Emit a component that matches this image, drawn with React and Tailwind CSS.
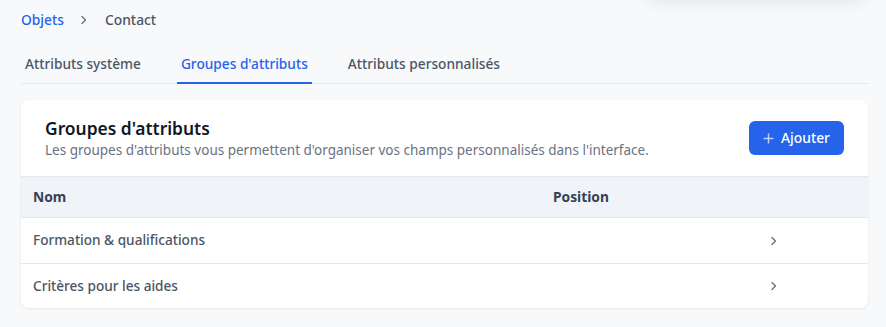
import React from "react";

function Chevron({ className = "" }) {
  return (
    <svg width="8" height="12" viewBox="0 0 8 12" className={className} fill="none">
      <path d="M2 2.5 L5.5 6 L2 9.5" stroke="currentColor" strokeWidth="1.4" strokeLinecap="round" strokeLinejoin="round" />
    </svg>
  );
}

export default function App() {
  const rows = ["Formation & qualifications", "Critères pour les aides"];
  return (
    <div className="relative min-h-[327px] bg-[#f8f9fb] pl-[21px] pr-[18px] pt-[10px] overflow-hidden font-['Noto_Sans',sans-serif]">
      <div className="absolute top-[-60px] left-[645px] w-[222px] h-[56px] rounded-lg bg-white shadow-[0_4px_18px_rgba(0,0,0,0.10)]" />
      <div className="flex items-center h-5 text-[13.8px]">
        <span className="text-[#2563eb] font-medium">Objets</span>
        <Chevron className="ml-[16px] mr-[17px] text-gray-500" />
        <span className="text-gray-600 font-medium">Contact</span>
      </div>
      <nav className="mt-[24px] flex gap-8 border-b border-gray-200">
        <div className="px-1 pb-[8px] text-[13.7px] leading-5 font-medium text-gray-600 -mb-px border-b-2 border-transparent">Attributs système</div>
        <div className="px-1 pb-[8px] text-[13.7px] leading-5 font-medium text-[#2563eb] -mb-px border-b-2 border-[#2563eb]">Groupes d'attributs</div>
        <div className="px-1 pb-[8px] text-[13.7px] leading-5 font-medium text-gray-600 -mb-px border-b-2 border-transparent">Attributs personnalisés</div>
      </nav>
      <div className="mt-4 bg-white rounded-lg shadow-[0_1px_3px_rgba(0,0,0,0.08)] overflow-hidden">
        <div className="flex items-center justify-between pl-6 pr-6 pt-[16px] pb-4">
          <div>
            <div className="text-[17.4px] leading-6 font-semibold text-gray-900">Groupes d'attributs</div>
            <div className="text-[13.5px] leading-5 text-gray-500">Les groupes d'attributs vous permettent d'organiser vos champs personnalisés dans l'interface.</div>
          </div>
          <button className="flex items-center gap-[7px] h-[34px] w-[95px] justify-center rounded-md bg-[#2563eb] text-white text-[13.8px] font-medium">
            <svg width="11" height="11" viewBox="0 0 11 11" className="opacity-70">
              <path d="M5.5 0.5 V10.5 M0.5 5.5 H10.5" stroke="white" strokeWidth="1.5" />
            </svg>
            Ajouter
          </button>
        </div>
        <div className="grid grid-cols-[520px_1fr] h-[42px] items-center bg-[#f0f3f8] border-t border-gray-200 border-b border-[#cfd8e3] text-[13.8px] font-bold text-gray-700">
          <div className="pl-3">Nom</div>
          <div className="pl-3">Position</div>
        </div>
        {rows.map((r, i) => (
          <div key={r} className={`grid grid-cols-[520px_1fr] h-[45px] items-center text-[13.6px] text-gray-600 font-medium ${i > 0 ? "border-t border-gray-200" : ""}`}>
            <div className="pl-3">{r}</div>
            <div className="flex justify-end pr-[90px] text-gray-500">
              <Chevron />
            </div>
          </div>
        ))}
      </div>
    </div>
  );
}
